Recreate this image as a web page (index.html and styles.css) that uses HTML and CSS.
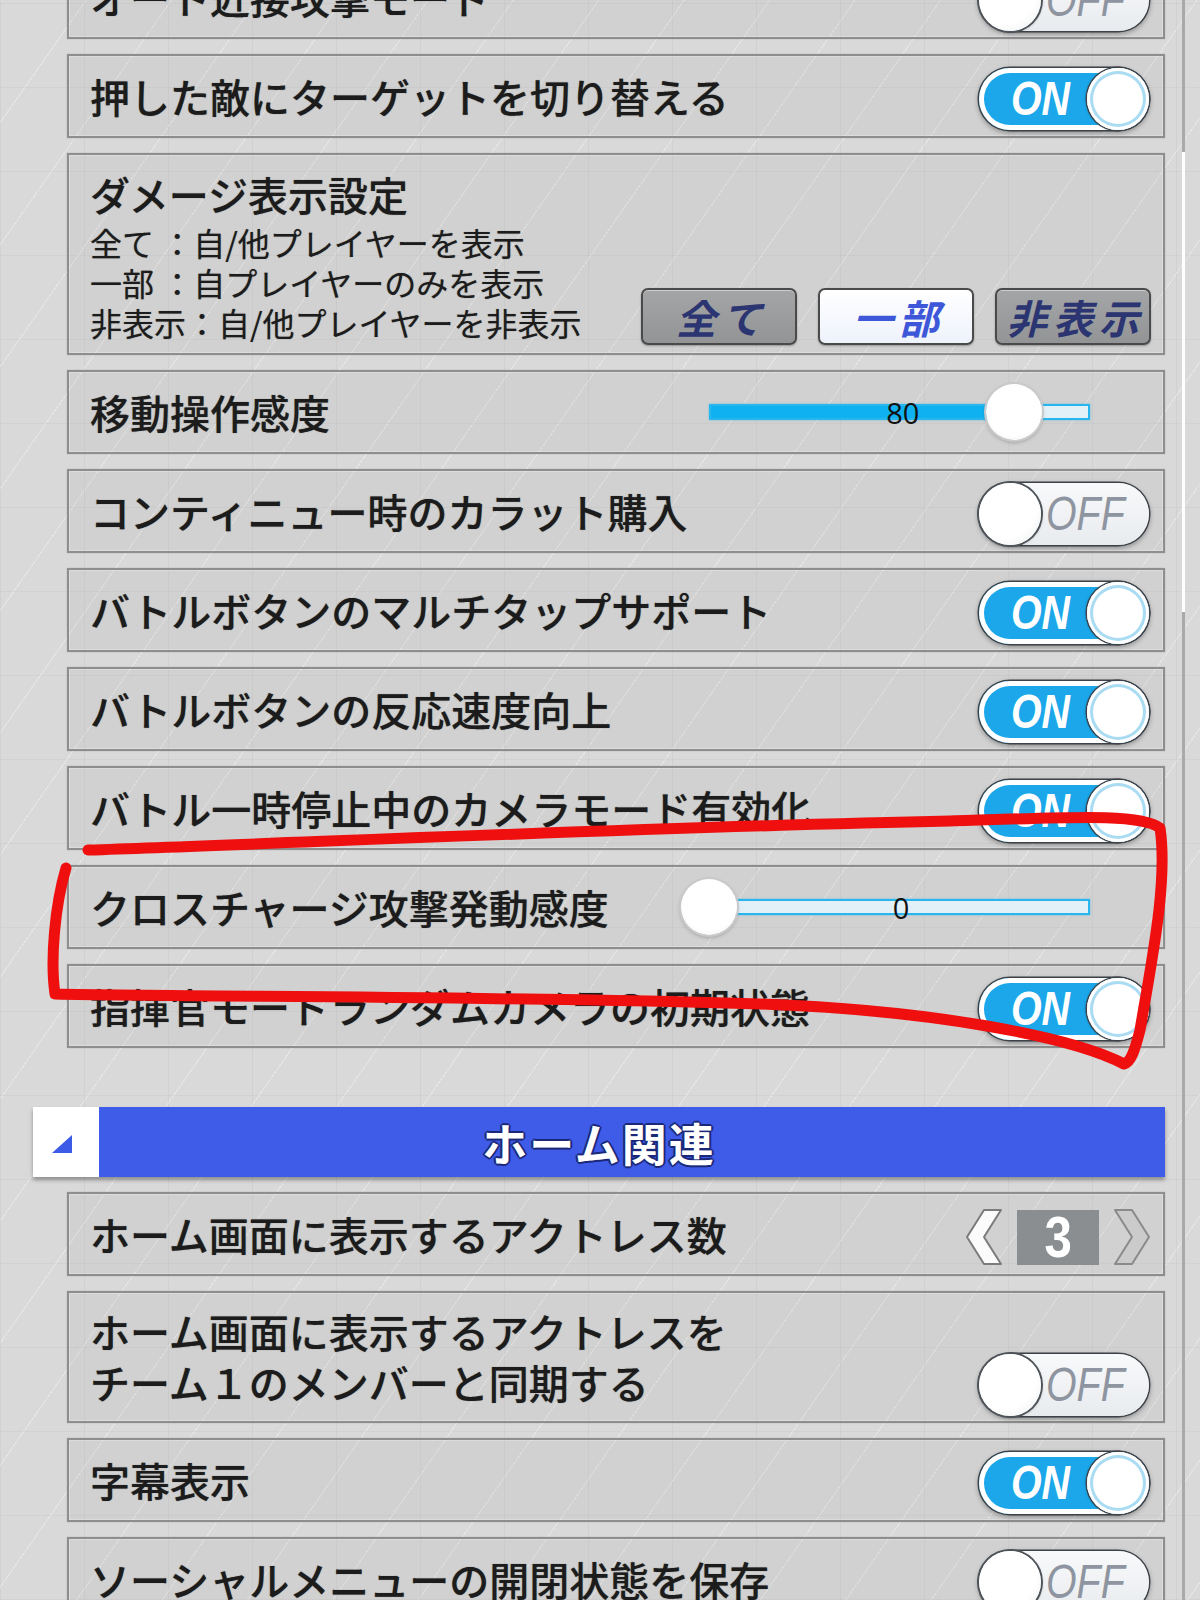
FILE: index.html
```html
<!DOCTYPE html>
<html lang="ja">
<head>
<meta charset="utf-8">
<title>設定</title>
<link rel="stylesheet" href="styles.css">
</head>
<body>
<div class="screen">
  <div class="scroll-track"><div class="scroll-thumb"></div></div>

  <div class="list">
    <div class="row">
      <span class="label">オート近接攻撃モード</span>
      <div class="toggle off"><span class="tg-knob"></span><span class="tg-text">OFF</span></div>
    </div>

    <div class="row">
      <span class="label">押した敵にターゲットを切り替える</span>
      <div class="toggle on"><span class="tg-text">ON</span><span class="tg-knob"></span></div>
    </div>

    <div class="row row-damage">
      <div class="damage-text">
        <div class="label title">ダメージ表示設定</div>
        <div class="sub">全て ：自/他プレイヤーを表示</div>
        <div class="sub">一部 ：自プレイヤーのみを表示</div>
        <div class="sub">非表示：自/他プレイヤーを非表示</div>
      </div>
      <div class="seg">
        <div class="segbtn">全て</div>
        <div class="segbtn sel">一部</div>
        <div class="segbtn">非表示</div>
      </div>
    </div>

    <div class="row">
      <span class="label">移動操作感度</span>
      <div class="slider">
        <div class="track"><div class="fill" style="width:80%"></div></div>
        <span class="val">80</span>
        <span class="sknob" style="left:80%"></span>
      </div>
    </div>

    <div class="row">
      <span class="label">コンティニュー時のカラット購入</span>
      <div class="toggle off"><span class="tg-knob"></span><span class="tg-text">OFF</span></div>
    </div>

    <div class="row">
      <span class="label">バトルボタンのマルチタップサポート</span>
      <div class="toggle on"><span class="tg-text">ON</span><span class="tg-knob"></span></div>
    </div>

    <div class="row">
      <span class="label">バトルボタンの反応速度向上</span>
      <div class="toggle on"><span class="tg-text">ON</span><span class="tg-knob"></span></div>
    </div>

    <div class="row">
      <span class="label">バトル一時停止中のカメラモード有効化</span>
      <div class="toggle on"><span class="tg-text">ON</span><span class="tg-knob"></span></div>
    </div>

    <div class="row">
      <span class="label">クロスチャージ攻撃発動感度</span>
      <div class="slider">
        <div class="track"><div class="fill" style="width:0%"></div></div>
        <span class="val">0</span>
        <span class="sknob" style="left:0%"></span>
      </div>
    </div>

    <div class="row">
      <span class="label">指揮官モードランダムカメラの初期状態</span>
      <div class="toggle on"><span class="tg-text">ON</span><span class="tg-knob"></span></div>
    </div>

    <div class="section-head">
      <div class="head-icon">
        <svg width="20" height="18" viewBox="0 0 20 18"><polygon points="0,18 20,18 20,0" fill="#3c5be6"/></svg>
      </div>
      <div class="head-bar"><span class="head-title">ホーム関連</span></div>
    </div>

    <div class="row">
      <span class="label">ホーム画面に表示するアクトレス数</span>
      <div class="stepper">
        <svg class="chev" width="38" height="58" viewBox="0 0 38 58"><polygon points="19,2 36,2 19,29 36,56 19,56 2,29" fill="#fbfbfb" stroke="#7b7b7b" stroke-width="2" stroke-linejoin="round"/></svg>
        <div class="numbox"><span class="num">3</span></div>
        <svg class="chev" width="38" height="58" viewBox="0 0 38 58"><polygon points="2,2 19,2 36,29 19,56 2,56 19,29" fill="#cbcbcb" stroke="#8a8a8a" stroke-width="2" stroke-linejoin="round"/></svg>
      </div>
    </div>

    <div class="row row-tall">
      <div class="label two-line">ホーム画面に表示するアクトレスを<br>チーム１のメンバーと同期する</div>
      <div class="toggle off"><span class="tg-knob"></span><span class="tg-text">OFF</span></div>
    </div>

    <div class="row">
      <span class="label">字幕表示</span>
      <div class="toggle on"><span class="tg-text">ON</span><span class="tg-knob"></span></div>
    </div>

    <div class="row">
      <span class="label">ソーシャルメニューの開閉状態を保存</span>
      <div class="toggle off"><span class="tg-knob"></span><span class="tg-text">OFF</span></div>
    </div>
  </div>

  <svg class="annot" width="1200" height="1600" viewBox="0 0 1200 1600">
    <path d="M 88 850 C 300 843, 650 827, 950 821 C 1060 818, 1140 812, 1160 828 C 1168 880, 1152 960, 1140 1030 C 1135 1050, 1131 1062, 1124 1064 C 1070 1036, 930 1010, 760 1004 C 500 996, 200 997, 55 994 C 50 960, 55 905, 66 868"
      fill="none" stroke="#f00f0f" stroke-width="11" stroke-linecap="round" stroke-linejoin="round"/>
  </svg>
</div>
</body>
</html>
```

FILE: styles.css
```css
html, body {
  margin: 0;
  padding: 0;
}

body {
  background: #d8d8d8;
  font-family: "Noto Sans CJK JP", "Noto Sans", sans-serif;
}

.screen {
  position: relative;
  width: 1200px;
  height: 1600px;
  overflow: hidden;
  background-color: #d9d9d9;
  background-image:
    repeating-linear-gradient(90deg, rgba(0,0,0,0.035) 0 1px, transparent 1px 84px),
    repeating-linear-gradient(0deg, rgba(0,0,0,0.03) 0 1px, transparent 1px 84px),
    repeating-linear-gradient(125deg, rgba(255,255,255,0.35) 0 1px, transparent 1px 70px);
}

.scroll-track {
  position: absolute;
  left: 1182px;
  top: 0;
  width: 3px;
  height: 1600px;
  background: #a9a9a9;
}

.scroll-thumb {
  margin-top: 152px;
  height: 460px;
  background: #ffffff;
}

.list {
  display: flex;
  flex-direction: column;
  gap: 15px;
  width: 1098px;
  margin-left: 67px;
  margin-top: -45px;
}

.row {
  box-sizing: border-box;
  height: 84px;
  flex-shrink: 0;
  border: 2px solid #8e8e8e;
  background: rgba(110, 110, 110, 0.07);
  box-shadow: inset 0 0 0 1px rgba(255,255,255,0.25), 0 0 1px rgba(0,0,0,0.25);
  display: flex;
  align-items: center;
  justify-content: space-between;
  padding: 0 14px 0 21px;
}

.label {
  font-size: 40px;
  font-weight: 500;
  line-height: 50px;
  color: #1c1c1c;
  white-space: nowrap;
  text-shadow: 0 0 1px rgba(0,0,0,0.5);
}

/* damage row */
.row-damage {
  height: 202px;
  align-items: flex-end;
}

.damage-text {
  align-self: flex-start;
  padding-top: 14px;
}

.title {
  margin-bottom: 3px;
}

.sub {
  font-size: 32px;
  line-height: 40px;
  color: #1c1c1c;
  white-space: nowrap;
  text-shadow: 0 0 1px rgba(0,0,0,0.45);
}

.seg {
  display: flex;
  gap: 21px;
  margin-bottom: 8px;
  margin-right: -2px;
}

.segbtn {
  box-sizing: border-box;
  width: 156px;
  height: 57px;
  border: 2px solid #4a4a4a;
  border-radius: 7px;
  background: linear-gradient(#a4a5a7, #939496);
  box-shadow: inset 0 1px 0 rgba(255,255,255,0.45), 0 1px 2px rgba(0,0,0,0.3);
  color: #2b3571;
  font-size: 40px;
  font-weight: 700;
  font-style: italic;
  letter-spacing: 6px;
  padding-left: 6px;
  display: flex;
  align-items: center;
  justify-content: center;
  line-height: 1;
}

.segbtn.sel {
  background: linear-gradient(#ffffff, #eef2fb);
  color: #3d57d8;
}

/* sliders */
.slider {
  position: relative;
  width: 381px;
  height: 62px;
  margin-right: 59px;
  display: flex;
  align-items: center;
}

.track {
  box-sizing: border-box;
  width: 100%;
  height: 16px;
  border: 2px solid #29b6ee;
  background: #e2f1f8;
  box-shadow: 0 0 2px rgba(41,182,238,0.6);
}

.fill {
  height: 100%;
  background: #10b1f0;
}

.val {
  position: absolute;
  left: 50%;
  top: 50%;
  transform: translate(-40%, -50%);
  font-family: "Open Sans", "Liberation Sans", sans-serif;
  font-size: 29px;
  color: #111;
  line-height: 1;
}

.sknob {
  position: absolute;
  top: 50%;
  width: 56px;
  height: 56px;
  margin-left: -28px;
  margin-top: -28px;
  border-radius: 50%;
  background: radial-gradient(circle at 50% 45%, #ffffff 62%, #ececec 100%);
  box-shadow: 0 0 0 2px #c9c9c9, 0 2px 4px rgba(0,0,0,0.35);
}

/* toggles */
.toggle {
  box-sizing: border-box;
  width: 170px;
  height: 62px;
  flex-shrink: 0;
  border-radius: 31px;
  display: flex;
  align-items: center;
  margin-top: 6px;
  box-shadow: 0 0 0 1.5px #3c4248, 0 2px 5px 1px rgba(0,0,0,0.35);
}

.toggle.on {
  background: #1ba7ea;
  box-shadow: inset 0 0 0 5px #ffffff, 0 0 0 1.5px #3c4248, 0 2px 5px 1px rgba(0,0,0,0.35);
}

.toggle.off {
  background: linear-gradient(#f8f9fb, #e8ebee);
}

.tg-knob {
  box-sizing: border-box;
  width: 62px;
  height: 62px;
  flex-shrink: 0;
  border-radius: 50%;
  background: #ffffff;
}

.on .tg-knob {
  margin-left: auto;
  box-shadow: inset 0 0 0 3px #ffffff, inset 0 0 0 6px #a9dcf2, 0 0 0 1.5px #3c4248, -1px 0 3px rgba(0,0,0,0.3);
}

.off .tg-knob {
  background: radial-gradient(circle at 40% 35%, #ffffff 60%, #eaeced 100%);
  box-shadow: 0 0 0 2px #4d5359, 1px 1px 3px rgba(0,0,0,0.35);
}

.tg-text {
  display: inline-block;
  font-family: "Liberation Sans", "DejaVu Sans", sans-serif;
  font-style: italic;
  font-weight: 700;
  font-size: 48px;
  line-height: 1;
  transform: scaleX(0.82);
  transform-origin: left center;
}

.on .tg-text {
  color: #ffffff;
  margin-left: 32px;
}

.off .tg-text {
  color: #8e95a0;
  font-weight: 400;
  font-size: 48px;
  margin-left: 5px;
}

/* section header */
.section-head {
  display: flex;
  height: 70px;
  flex-shrink: 0;
  margin-left: -34px;
  margin-top: 44px;
  box-shadow: 0 3px 4px rgba(0,0,0,0.35);
}

.head-icon {
  box-sizing: border-box;
  width: 66px;
  background: #ffffff;
  display: flex;
  align-items: flex-end;
  justify-content: flex-end;
  padding: 0 27px 24px 0;
}

.head-bar {
  flex: 1;
  background: #3f5ce8;
  display: flex;
  align-items: center;
  justify-content: center;
  padding-right: 66px;
}

.head-title {
  font-size: 45px;
  font-weight: 700;
  letter-spacing: 2px;
  color: #ffffff;
  line-height: 1;
  text-shadow: 2px 0 0 #1b2878, -2px 0 0 #1b2878, 0 2px 0 #1b2878, 0 -2px 0 #1b2878,
    1px 1px 1px #1b2878, -1px -1px 1px #1b2878, 1px -1px 1px #1b2878, -1px 1px 1px #1b2878;
}

/* stepper */
.stepper {
  display: flex;
  align-items: center;
  gap: 14px;
  margin-top: 6px;
  margin-right: -2px;
}

.chev {
  display: block;
}

.numbox {
  width: 82px;
  height: 55px;
  background: #8b8e90;
  display: flex;
  align-items: center;
  justify-content: center;
}

.num {
  display: inline-block;
  font-family: "Liberation Sans", "DejaVu Sans", sans-serif;
  font-weight: 700;
  font-size: 58px;
  line-height: 1;
  color: #ffffff;
  transform: scaleX(0.85);
}

/* tall row */
.row-tall {
  height: 132px;
}

.two-line {
  line-height: 51px;
}

.row-tall .toggle {
  align-self: flex-end;
  margin-bottom: 5px;
}

/* annotation overlay */
.annot {
  position: absolute;
  left: 0;
  top: 0;
  pointer-events: none;
}
```
